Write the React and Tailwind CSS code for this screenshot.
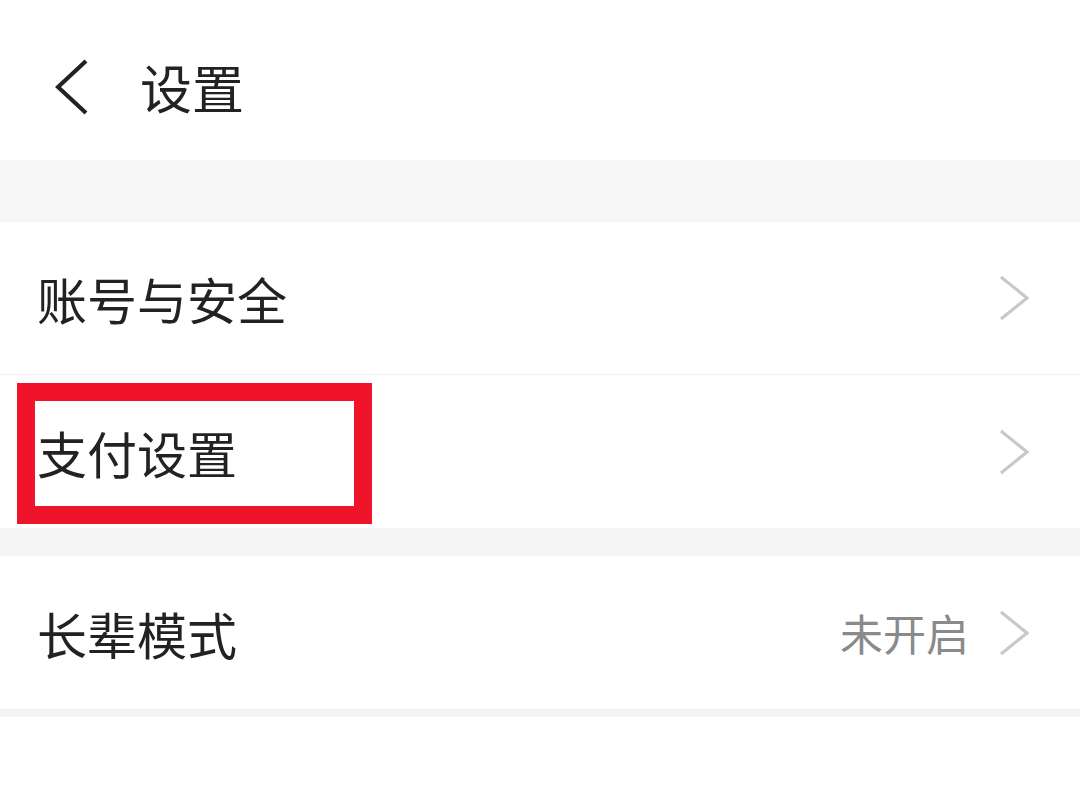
import React from "react";

const font = { fontFamily: '"Noto Sans CJK SC", "Noto Sans", sans-serif' };

function Chevron({ dir = "right", className = "" }) {
  const d = dir === "right" ? "M2 2 L28 23 L2 44" : "M31 2 L3 28 L31 54";
  return (
    <svg
      className={className}
      viewBox={dir === "right" ? "0 0 30 46" : "0 0 34 56"}
      fill="none"
    >
      <path d={d} stroke="currentColor" strokeWidth={dir === "right" ? 3.2 : 4.2} strokeLinejoin="miter" />
    </svg>
  );
}

function Row({ label, value, children, border }) {
  return (
    <div className={`relative flex items-center h-[153px] bg-white ${border ? "border-b border-[#f1f1f1]" : ""}`}>
      <span className="pl-[37px] text-[50px] leading-none text-[#222]">{label}</span>
      <div className="ml-auto flex items-center pr-[51px]">
        {value && <span className="mr-[30px] text-[43px] leading-none text-[#8a8a8a]">{value}</span>}
        <Chevron className="w-[30px] h-[46px] text-[#c9c9c9]" />
      </div>
      {children}
    </div>
  );
}

export default function App() {
  return (
    <div className="w-[1080px] h-[810px] bg-white overflow-hidden" style={font}>
      {/* header */}
      <div className="flex items-center h-[160px] pt-[14px] bg-white">
        <Chevron dir="left" className="ml-[55px] w-[34px] h-[56px] text-[#222]" />
        <span className="ml-[51px] text-[52px] leading-none text-[#222]">设置</span>
      </div>
      <div className="h-[62px] bg-[#f6f6f6]" />

      <Row label="账号与安全" border />
      <Row label="支付设置">
        <div className="absolute left-[17px] top-[8px] w-[355px] h-[141px] border-[18px] border-[#f0142b]" />
      </Row>
      <div className="h-[28px] bg-[#f5f5f5]" />
      <Row label="长辈模式" value="未开启" />
      <div className="h-[8px] bg-[#f3f3f3]" />
      <div className="flex-1 bg-white" />
    </div>
  );
}
